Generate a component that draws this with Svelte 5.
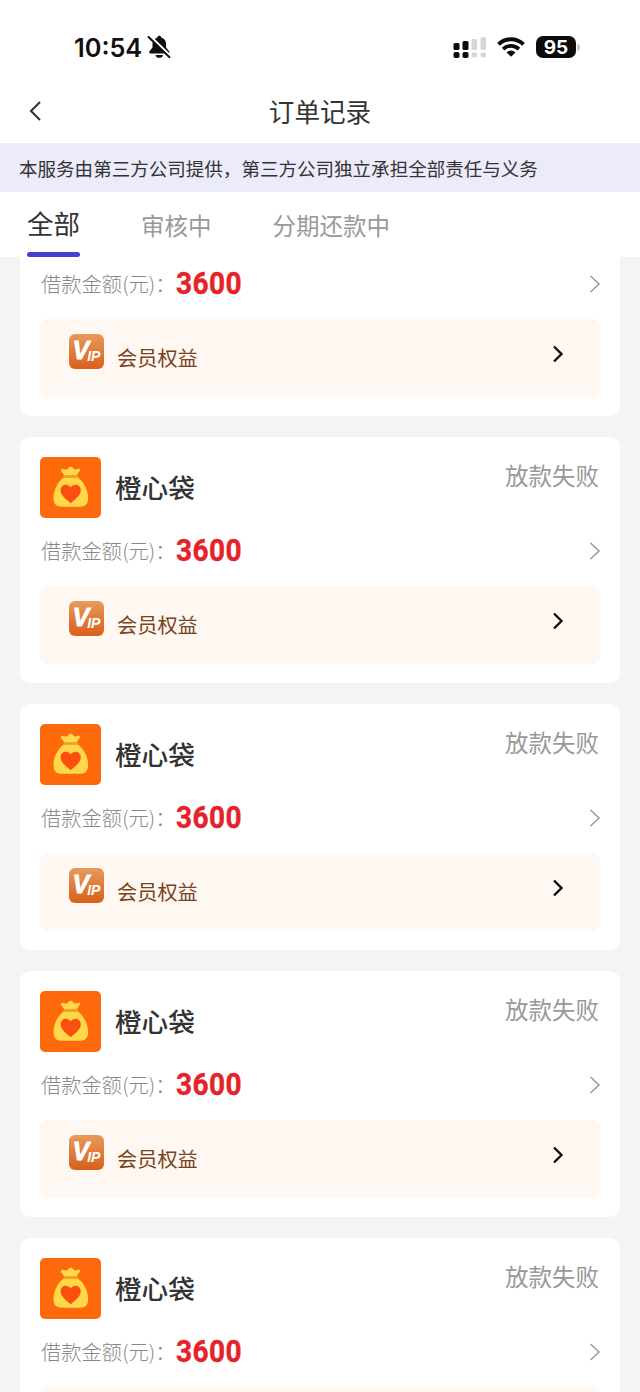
<script>
  const tabs = ['全部', '审核中', '分期还款中']

  let active = $state(0)

  const orders = Array.from({ length: 5 }, (_, id) => ({
    id,
    name: '橙心袋',
    status: '放款失败',
    amount: 3600,
  }))
</script>

<div class="page">
  <div class="status-bar">
    <div class="clock">
      <span>10:54</span>
      <svg viewBox="0 0 24 24" width="24" height="24">
        <path
          d="M12.3 .8c1.1 0 1.8.7 1.9 1.6 3 .8 4.9 3.3 4.9 6.400v3.600l3 3.900c.8 1.200.2 2.300-1.100 2.300H3.600c-1.300 0-1.900-1.100-1.100-2.300l3-3.900V8.800c0-3.100 1.900-5.600 4.900-6.400.1-.9.8-1.600 1.900-1.600zM8.500 19.900h7.600c-.4 1.900-1.800 2.900-3.800 2.900s-3.400-1-3.800-2.900z"
          fill="#111"
        />
        <path d="M3 1.200 23.500 21" stroke="#fff" stroke-width="2.600" />
        <path d="M1.500 2 22.500 22.200" stroke="#111" stroke-width="2" stroke-linecap="round" />
      </svg>
    </div>
    <div class="signals">
      <svg viewBox="0 0 33 22" width="33" height="22">
        <g fill="#0b0b0b">
          <rect x="0.5" y="7" width="6" height="7" rx="1.5" />
          <rect x="9.5" y="5" width="6" height="9" rx="1.5" />
          <rect x="0.5" y="16" width="6" height="6" rx="1.8" />
          <rect x="9.5" y="16" width="6" height="6" rx="1.8" />
        </g>
        <g fill="#d6d6d6">
          <rect x="18.5" y="3" width="5.5" height="11" rx="1.5" />
          <rect x="27.5" y="1" width="5.500" height="13" rx="1.5" />
          <rect x="18.5" y="16.5" width="5.5" height="5" rx="1.8" />
          <rect x="27.5" y="16.5" width="5.5" height="5" rx="1.8" />
        </g>
      </svg>
      <svg class="wifi" viewBox="0 0 28 20" width="28" height="20">
        <g fill="none" stroke="#0b0b0b" stroke-width="3.8">
          <path d="M1.5 7.3a18 18 0 0 1 25 0" />
          <path d="M6.1 12.1a11.4 11.4 0 0 1 15.8 0" />
        </g>
        <path d="M9.5 15.4a6.5 6.5 0 0 1 9 0L14 19.8z" fill="#0b0b0b" />
      </svg>
      <span class="battery">95</span>
      <span class="battery-cap"></span>
    </div>
  </div>

  <header class="navbar">
    <button type="button" class="back" aria-label="返回">
      <svg viewBox="0 0 12 20" width="12" height="20">
        <path d="M11 1 2 10l9 9" fill="none" stroke="#333" stroke-width="2.1" />
      </svg>
    </button>
    <h1>订单记录</h1>
  </header>

  <div class="notice">本服务由第三方公司提供，第三方公司独立承担全部责任与义务</div>

  <nav class="tabs">
    {#each tabs as tab, i}
      <button
        type="button"
        class="tab"
        class:active={i === active}
        on:click={() => (active = i)}
      >{tab}</button>
    {/each}
  </nav>

  <main class="list">
    {#each orders as order, i (order.id)}
      <article class="card">
        <!-- the first order is scrolled past its head -->
        {#if i > 0}
          <div class="head">
            <svg class="logo" viewBox="0 0 61 61" width="61" height="61">
              <rect width="61" height="61" rx="5" fill="#fe6a0b" />
              <path
                d="M21 12.5c2-2 3.500.5 5.500 0 2-.8 2.300-2.700 4.300-2.700s2.200 2.200 4.200 2.600c2 .4 3.700-1.400 5-.2 1 1-2.600 4-3.200 6.300H24.300C23.700 16.300 20 14.300 21 12.500z"
                fill="#ffd84d"
              />
              <path
                d="M23.5 20.5h14.600c5.400 4.500 9.600 11.400 10 19.500.3 7-2.600 9.700-8.600 9.700H22.100c-6 0-8.900-2.700-8.600-9.700.4-8.100 4.600-15 10-19.500z"
                fill="#ffd84a"
              />
              <path d="M23.5 19.5h14.5" stroke="#e8a51c" stroke-width="2" />
              <path
                d="M30.7 46.3c-4.500-3.900-10.100-7.900-10.100-13 0-5.800 7.200-7.500 10.100-2.700 2.900-4.800 10.100-3.100 10.100 2.700 0 5.100-5.600 9.100-10.100 13z"
                fill="#fb4f10"
              />
            </svg>
            <h2>{order.name}</h2>
            <span class="status">{order.status}</span>
          </div>
        {/if}

        <div class="amount">
          <span class="label">借款金额(元)：</span>
          <strong>{order.amount}</strong>
          <svg viewBox="0 0 12 18" width="12" height="18">
            <path d="m1.5 1 8.500 8-8.500 8" fill="none" stroke="#999" stroke-width="1.5" />
          </svg>
        </div>

        <div class="benefit">
          <!-- the last order ends below the fold -->
          {#if i < orders.length - 1}
            <span class="vip"><b>V</b><i>IP</i></span>
            <span class="benefit-name">会员权益</span>
            <svg viewBox="0 0 12 18" width="12" height="18">
              <path d="m2 1.5 7.500 7.500L2 16.500" fill="none" stroke="#111" stroke-width="2.4" />
            </svg>
          {/if}
        </div>
      </article>
    {/each}
  </main>
</div>

<style>
  :global(body) {
    background: #f4f4f4;
  }
  .page {
    display: flex;
    flex-direction: column;
    height: 1392px;
    overflow: hidden;
    background: #f4f4f4;
    color: #333;
    font-family: 'Noto Sans CJK SC', sans-serif;
  }
  button {
    padding: 0;
    border: none;
    background: none;
    font-family: inherit;
    cursor: pointer;
  }
  h1,
  h2 {
    margin: 0;
    font-weight: 400;
  }
  .status-bar {
    display: flex;
    align-items: center;
    justify-content: space-between;
    height: 80px;
    padding: 14px 60px 0 74px;
    box-sizing: border-box;
    background: #fff;
  }
  .clock {
    display: flex;
    align-items: center;
    gap: 5px;
    color: #111;
    font-family: Inter, sans-serif;
    font-size: 25.3px;
    font-weight: 600;
  }
  .signals {
    display: flex;
    align-items: center;
  }
  .wifi {
    margin: 0 11px;
  }
  .battery {
    width: 40px;
    height: 22px;
    border-radius: 7px;
    background: #0b0b0b;
    color: #fff;
    font: 700 19px/23px Inter, sans-serif;
    text-align: center;
  }
  .battery-cap {
    width: 3px;
    height: 7px;
    margin-left: 1px;
    border-radius: 0 3px 3px 0;
    background: #ccc;
  }
  .navbar {
    display: grid;
    grid-template-columns: 60px 1fr 60px;
    align-items: center;
    height: 63px;
    padding-bottom: 2px;
    box-sizing: border-box;
    background: #fff;
  }
  .back {
    display: flex;
    padding-left: 29px;
  }
  .navbar h1 {
    font-size: 25.6px;
    line-height: 60px;
    text-align: center;
  }
  .notice {
    height: 49px;
    padding-left: 19px;
    background: #ecebfb;
    font-size: 18.55px;
    line-height: 49px;
    white-space: nowrap;
  }
  .tabs {
    display: flex;
    gap: 61px;
    height: 65px;
    padding-left: 27px;
    background: #fff;
  }
  .tab {
    height: 65px;
    color: #999;
    font-size: 23.5px;
    line-height: 66px;
    white-space: nowrap;
  }
  .tab.active {
    display: flex;
    flex-direction: column;
    color: #333;
    font-size: 26.5px;
    line-height: 60px;
  }
  .tab.active::before {
    content: '';
    height: 1px;
  }
  .tab.active::after {
    content: '';
    width: 100%;
    height: 5px;
    margin-top: -1px;
    border-radius: 3px;
    background: #4540d0;
  }
  .list {
    display: flex;
    flex: 1;
    flex-direction: column;
    gap: 21px;
    min-height: 0;
    padding: 0 20px;
    overflow: hidden;
  }
  .card {
    flex-shrink: 0;
    height: 246px;
    padding: 20px 20px 0;
    box-sizing: border-box;
    border-radius: 10px;
    background: #fff;
  }
  .card:first-child {
    height: 159px;
    padding-top: 0;
    border-radius: 0 0 10px 10px;
  }
  .card:first-child .amount {
    height: 60px;
    padding-bottom: 6px;
    box-sizing: border-box;
  }
  .head {
    display: flex;
    align-items: center;
    height: 61px;
  }
  .head h2 {
    margin: -2px 0 0 14px;
    font-size: 26.6px;
    font-weight: 500;
    line-height: 60px;
  }
  .status {
    align-self: flex-start;
    margin: 1px 1px 0 auto;
    color: #999;
    font-size: 23.5px;
    line-height: 34px;
  }
  .amount {
    display: flex;
    align-items: center;
    height: 66px;
    margin-bottom: 2px;
  }
  .label {
    width: 135px;
    margin-top: -2px;
    padding-left: 1px;
    box-sizing: border-box;
    color: #888;
    font-size: 20.3px;
    font-weight: 300;
    white-space: nowrap;
  }
  .amount strong {
    margin-left: 1px;
    color: #e62129;
    font: 700 30.5px/1 Roboto, sans-serif;
    letter-spacing: 0.4px;
    -webkit-text-stroke: 0.4px #e62129;
    transform: scaleX(0.92);
    transform-origin: left;
  }
  .amount svg {
    margin: 0 -1px 0 auto;
  }
  .benefit {
    display: flex;
    align-items: center;
    height: 78px;
    padding: 0 36px 0 29px;
    border-radius: 8px;
    background: #fff7f1;
    box-sizing: border-box;
  }
  .vip {
    display: flex;
    align-items: baseline;
    justify-content: center;
    width: 35px;
    height: 35px;
    margin: -13px 13px 0 0;
    border-radius: 6px;
    background: linear-gradient(#e79a5c, #d8601a);
    color: #fff;
    font: italic 700 25px/33px 'Liberation Sans', sans-serif;
  }
  .vip b {
    -webkit-text-stroke: 0.8px #fff;
  }
  .vip i {
    margin-left: -2px;
    font-size: 14px;
    line-height: 14px;
    transform: translateY(2px);
  }
  .benefit-name {
    margin-top: -2px;
    color: #7a431b;
    font-size: 20.2px;
  }
  .benefit > svg {
    margin: -8px 0 0 auto;
  }
</style>
